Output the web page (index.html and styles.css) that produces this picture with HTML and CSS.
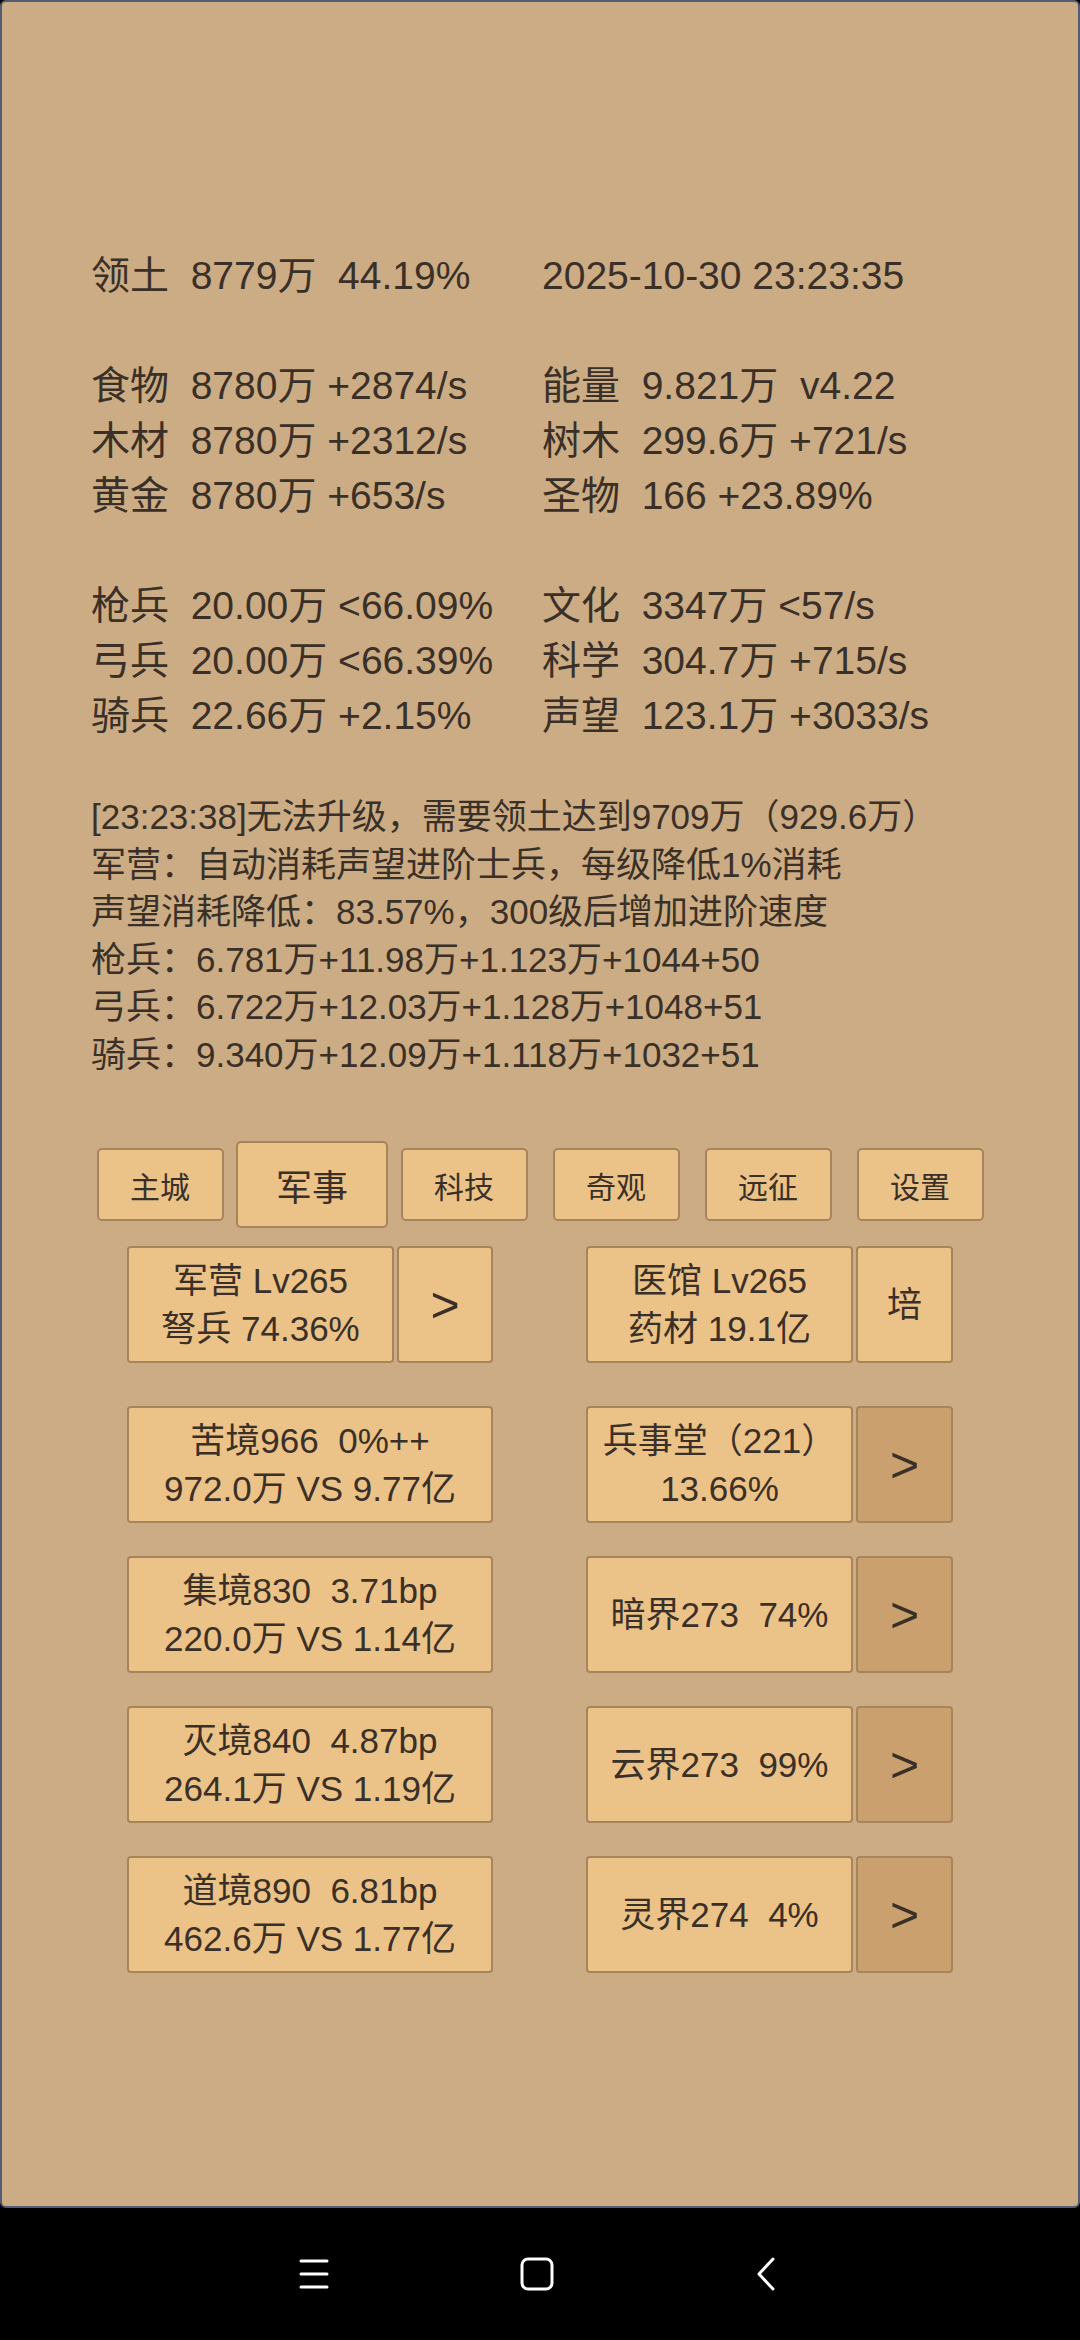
FILE: index.html
```html
<!DOCTYPE html>
<html lang="zh-CN">
<head>
<meta charset="utf-8">
<title>Game</title>
<link rel="stylesheet" href="styles.css">
</head>
<body>
<div class="app">
  <div class="stats">
    <div class="group">
      <div class="line">领土  8779万  44.19%</div><div class="line">2025-10-30 23:23:35</div>
    </div>
    <div class="group">
      <div class="line">食物  8780万 +2874/s</div><div class="line">能量  9.821万  v4.22</div>
      <div class="line">木材  8780万 +2312/s</div><div class="line">树木  299.6万 +721/s</div>
      <div class="line">黄金  8780万 +653/s</div><div class="line">圣物  166 +23.89%</div>
    </div>
    <div class="group">
      <div class="line">枪兵  20.00万 &lt;66.09%</div><div class="line">文化  3347万 &lt;57/s</div>
      <div class="line">弓兵  20.00万 &lt;66.39%</div><div class="line">科学  304.7万 +715/s</div>
      <div class="line">骑兵  22.66万 +2.15%</div><div class="line">声望  123.1万 +3033/s</div>
    </div>
  </div>

  <div class="log">
    <div class="log-line">[23:23:38]无法升级，需要领土达到9709万（929.6万）</div>
    <div class="log-line">军营：自动消耗声望进阶士兵，每级降低1%消耗</div>
    <div class="log-line">声望消耗降低：83.57%，300级后增加进阶速度</div>
    <div class="log-line">枪兵：6.781万+11.98万+1.123万+1044+50</div>
    <div class="log-line">弓兵：6.722万+12.03万+1.128万+1048+51</div>
    <div class="log-line">骑兵：9.340万+12.09万+1.118万+1032+51</div>
  </div>

  <div class="tabs">
    <div class="slot"><div class="tab">主城</div></div>
    <div class="slot"><div class="tab active">军事</div></div>
    <div class="slot"><div class="tab">科技</div></div>
    <div class="slot"><div class="tab">奇观</div></div>
    <div class="slot"><div class="tab">远征</div></div>
    <div class="slot"><div class="tab">设置</div></div>
  </div>

  <div class="grid">
    <div class="row first">
      <div class="cell">
        <div class="btn box"><span>军营 Lv265</span><span>弩兵 74.36%</span></div>
        <div class="btn arrow">&gt;</div>
      </div>
      <div class="cell">
        <div class="btn box"><span>医馆 Lv265</span><span>药材 19.1亿</span></div>
        <div class="btn side">培</div>
      </div>
    </div>

    <div class="row">
      <div class="cell">
        <div class="btn wide"><span>苦境966  0%++</span><span>972.0万 VS 9.77亿</span></div>
      </div>
      <div class="cell">
        <div class="btn box"><span>兵事堂（221）</span><span>13.66%</span></div>
        <div class="btn arrow dark">&gt;</div>
      </div>
    </div>

    <div class="row">
      <div class="cell">
        <div class="btn wide"><span>集境830  3.71bp</span><span>220.0万 VS 1.14亿</span></div>
      </div>
      <div class="cell">
        <div class="btn box"><span>暗界273  74%</span></div>
        <div class="btn arrow dark">&gt;</div>
      </div>
    </div>

    <div class="row">
      <div class="cell">
        <div class="btn wide"><span>灭境840  4.87bp</span><span>264.1万 VS 1.19亿</span></div>
      </div>
      <div class="cell">
        <div class="btn box"><span>云界273  99%</span></div>
        <div class="btn arrow dark">&gt;</div>
      </div>
    </div>

    <div class="row">
      <div class="cell">
        <div class="btn wide"><span>道境890  6.81bp</span><span>462.6万 VS 1.77亿</span></div>
      </div>
      <div class="cell">
        <div class="btn box"><span>灵界274  4%</span></div>
        <div class="btn arrow dark">&gt;</div>
      </div>
    </div>
  </div>
</div>

<div class="nav">
  <svg class="nav-icon menu" width="32" height="32" viewBox="0 0 32 32" fill="none" stroke="#fff" stroke-width="3" stroke-linecap="round">
    <line x1="3" y1="3" x2="29" y2="3"/>
    <line x1="3" y1="16" x2="29" y2="16"/>
    <line x1="3" y1="29" x2="29" y2="29"/>
  </svg>
  <svg class="nav-icon home" width="34" height="34" viewBox="0 0 34 34" fill="none" stroke="#fff" stroke-width="3">
    <rect x="2" y="2" width="30" height="30" rx="6" ry="6"/>
  </svg>
  <svg class="nav-icon back" width="22" height="34" viewBox="0 0 22 34" fill="none" stroke="#fff" stroke-width="3" stroke-linecap="round" stroke-linejoin="round">
    <polyline points="18,2 4,17 18,32"/>
  </svg>
</div>
</body>
</html>
```

FILE: styles.css
```css
* { box-sizing: border-box; }

html, body {
  margin: 0;
  padding: 0;
  width: 1080px;
  height: 2340px;
  background: #000;
  overflow: hidden;
}

body {
  font-family: "Liberation Sans", "Noto Sans CJK SC", sans-serif;
  color: #3a3027;
}

.app {
  height: 2208px;
  background: #cbac84;
  border: 2px solid #545b74;
  border-radius: 6px;
  padding-top: 246px;
  overflow: hidden;
}

.stats {
  padding-left: 89px;
  font-size: 39px;
}

.group {
  display: grid;
  grid-template-columns: 451px auto;
  grid-auto-rows: 55px;
}

.group + .group {
  margin-top: 55px;
}

.line {
  white-space: pre;
  line-height: 55px;
}

.log {
  margin-top: 50px;
  padding-left: 89px;
  font-size: 35px;
}

.log-line {
  line-height: 47.5px;
  white-space: nowrap;
}

.tabs {
  margin-top: 63px;
  margin-left: 82px;
  display: flex;
  align-items: center;
  height: 87px;
}

.slot {
  width: 152px;
  display: flex;
  justify-content: center;
}

.tab {
  width: 127px;
  height: 73px;
  background: #ebc288;
  border: 2px solid #a8845c;
  border-radius: 5px;
  display: flex;
  align-items: center;
  justify-content: center;
  font-size: 30px;
}

.tab.active {
  width: 152px;
  height: 87px;
  font-size: 36px;
}

.grid {
  margin-top: 18px;
  margin-left: 125px;
  display: grid;
  grid-template-columns: 366px 367px;
  column-gap: 93px;
}

.row {
  display: contents;
}

.cell {
  display: flex;
  gap: 3px;
  height: 117px;
  margin-top: 33px;
}

.row.first .cell {
  margin-top: 0;
  margin-bottom: 10px;
}

.btn {
  height: 117px;
  background: #ebc288;
  border: 2px solid #a8845c;
  border-radius: 4px;
  display: flex;
  flex-direction: column;
  align-items: center;
  justify-content: center;
  font-size: 35px;
  line-height: 48px;
  white-space: pre;
}

.box {
  width: 267px;
}

.wide {
  width: 366px;
}

.arrow {
  flex: 1;
  font-size: 50px;
}

.side {
  flex: 1;
}

.arrow.dark {
  background: #c9a06e;
}

.nav {
  height: 132px;
  background: #000;
  display: flex;
  align-items: center;
  padding-left: 298px;
}

.nav-icon {
  display: block;
}

.home {
  margin-left: 190px;
}

.back {
  margin-left: 201px;
}
```
